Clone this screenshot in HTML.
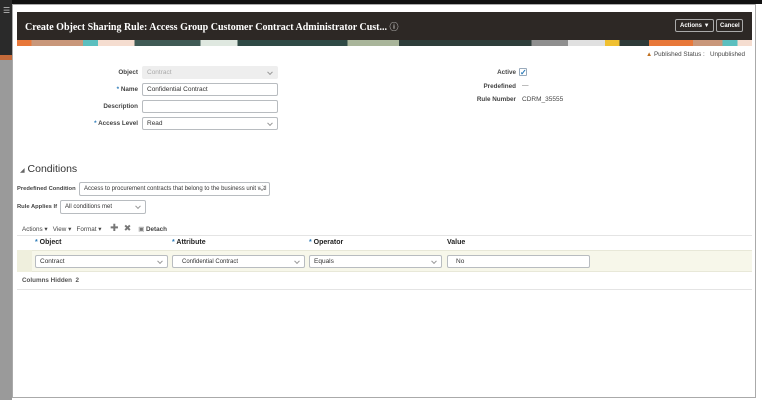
<!DOCTYPE html>
<html><head><meta charset="utf-8"><style>
*{box-sizing:border-box;margin:0;padding:0}
body{width:762px;height:400px;overflow:hidden;background:#fff;font-family:"Liberation Sans",sans-serif;font-size:7px;color:#333;position:relative}
.a{position:absolute;white-space:nowrap}
.lbl{position:absolute;text-align:right;font-size:6.3px;color:#444;font-weight:bold;white-space:nowrap}
.inp{position:absolute;border:1px solid #b8bcc0;border-radius:2px;background:#fff;font-size:6.5px;padding-left:4px;display:flex;align-items:center;color:#333;white-space:nowrap;overflow:hidden}
.chev{position:absolute;right:5px;top:50%;width:4px;height:4px;border-right:1px solid #999;border-bottom:1px solid #999;transform:translateY(-70%) rotate(45deg);background:#fff}
.req{color:#2a7ab8}
.th{position:absolute;top:239px;font-size:7px;font-weight:bold;color:#222}
</style></head><body>
<div class="a" style="left:0;top:0;width:762px;height:4px;background:#111"></div>
<div class="a" style="left:0;top:0;width:12px;height:55px;background:#2a2a2a"></div>
<div class="a" style="left:0;top:55px;width:12px;height:5px;background:#c46a3a"></div>
<div class="a" style="left:0;top:60px;width:12px;height:340px;background:#9a9a9a"></div>
<div class="a" style="left:3px;top:6px;color:#ccc;font-size:8px">☰</div>
<div class="a" style="left:12px;top:4px;width:744px;height:394px;border:1px solid #aaa;background:#fff"></div>
<div class="a" style="left:17px;top:12px;width:735px;height:28px;background:#2d2825"></div>
<div class="a" style="left:17px;top:40px;width:735px;height:6px;background:linear-gradient(90deg,#e8783a 0 2%,#c9977a 2% 9%,#5bbfbf 9% 11%,#f5ddd0 11% 16%,#3f5a55 16% 25%,#dfe8e0 25% 30%,#2f4a45 30% 45%,#a9b59a 45% 52%,#2e3d3a 52% 70%,#8f8f8f 70% 75%,#e0e0e0 75% 80%,#f0c030 80% 82%,#2d3a38 82% 86%,#e8783a 86% 92%,#c9977a 92% 96%,#5bbfbf 96% 98%,#f5ddd0 98%)"></div>
<div class="a" style="left:25px;top:20px;font-family:'Liberation Serif',serif;font-size:10px;color:#fff;font-weight:bold">Create Object Sharing Rule: Access Group Customer Contract Administrator Cust... <span style="font-weight:normal;font-family:'Liberation Sans';font-size:9px">ⓘ</span></div>
<div class="a" style="left:675px;top:19px;width:39px;height:13px;border:1px solid #aaa;border-radius:2px;color:#fff;font-size:6px;font-weight:bold;padding:3px 0 0 4px">Actions ▼</div>
<div class="a" style="left:716px;top:19px;width:27px;height:13px;border:1px solid #aaa;border-radius:2px;color:#fff;font-size:6px;font-weight:bold;padding:3px 0 0 3px">Cancel</div>
<div class="a" style="left:646px;top:51px;font-size:6.3px;color:#444"><span style="color:#c07020">▲</span> Published Status :&nbsp;&nbsp; Unpublished</div>

<div class="lbl" style="left:60px;width:78px;top:69px">Object</div>
<div class="inp" style="left:142px;top:66px;width:136px;height:13px;background:#eee;border-color:#eee;color:#aaa">Contract<span class="chev" style="background:none"></span></div>
<div class="lbl" style="left:60px;width:78px;top:86px"><span class="req">*</span> Name</div>
<div class="inp" style="left:142px;top:83px;width:136px;height:13px">Confidential Contract</div>
<div class="lbl" style="left:60px;width:78px;top:103px">Description</div>
<div class="inp" style="left:142px;top:100px;width:136px;height:13px"></div>
<div class="lbl" style="left:60px;width:78px;top:120px"><span class="req">*</span> Access Level</div>
<div class="inp" style="left:142px;top:117px;width:136px;height:13px">Read<span class="chev"></span></div>

<div class="lbl" style="left:440px;width:76px;top:69px">Active</div>
<div class="a" style="left:519px;top:68px;width:8px;height:8px;border:1px solid #9ab;border-radius:1px;color:#2a7ab8;font-size:8px;line-height:7px;font-weight:bold">✓</div>
<div class="lbl" style="left:440px;width:76px;top:83px">Predefined</div>
<div class="a" style="left:522px;top:82px;font-size:6.5px;color:#666">—</div>
<div class="lbl" style="left:440px;width:76px;top:96px">Rule Number</div>
<div class="a" style="left:522px;top:96px;font-size:6.5px;color:#444">CDRM_35555</div>

<div class="a" style="left:20px;top:163px;font-size:10.5px;color:#333"><span style="font-size:6px;color:#666">◢</span> Conditions</div>
<div class="a" style="left:17px;top:186px;font-size:5.8px;font-weight:bold;color:#444">Predefined Condition</div>
<div class="inp" style="left:79px;top:182px;width:191px;height:14px;font-size:6px">Access to procurement contracts that belong to the business unit witl<span class="chev"></span></div>
<div class="a" style="left:17px;top:204px;font-size:5.8px;font-weight:bold;color:#444">Rule Applies If</div>
<div class="inp" style="left:60px;top:200px;width:86px;height:14px;font-size:6px">All conditions met<span class="chev"></span></div>
<div class="a" style="left:22px;top:223px;font-size:6.3px;color:#444">Actions ▾&nbsp;&nbsp; View ▾&nbsp;&nbsp; Format ▾&nbsp;&nbsp;&nbsp;&nbsp; <span style="font-size:10px;color:#777">✚</span>&nbsp;&nbsp; <span style="font-size:9px;color:#777">✖</span>&nbsp;&nbsp;&nbsp; <span style="color:#777">▣</span> <b>Detach</b></div>

<div class="a" style="left:17px;top:235px;width:735px;height:1px;background:#e4e4e4"></div>
<div class="th" style="left:35px"><span class="req">*</span> Object</div>
<div class="th" style="left:172px"><span class="req">*</span> Attribute</div>
<div class="th" style="left:309px"><span class="req">*</span> Operator</div>
<div class="th" style="left:447px">Value</div>
<div class="a" style="left:17px;top:250px;width:735px;height:22px;background:#f7f7ea;border-top:1px solid #e8e8d8;border-bottom:1px solid #e8e8d8"></div>
<div class="a" style="left:17px;top:250px;width:15px;height:22px;background:#efefdd"></div>
<div class="inp" style="left:35px;top:255px;width:133px;height:13px">Contract<span class="chev"></span></div>
<div class="inp" style="left:172px;top:255px;width:133px;height:13px;font-size:6px;padding-left:9px">Confidential Contract<span class="chev"></span></div>
<div class="inp" style="left:309px;top:255px;width:133px;height:13px">Equals<span class="chev"></span></div>
<div class="inp" style="left:447px;top:255px;width:143px;height:13px;padding-left:8px">No</div>
<div class="a" style="left:22px;top:277px;font-size:6.3px;font-weight:bold;color:#555">Columns Hidden&nbsp; 2</div>
<div class="a" style="left:17px;top:289px;width:735px;height:1px;background:#e4e4e4"></div>
</body></html>
